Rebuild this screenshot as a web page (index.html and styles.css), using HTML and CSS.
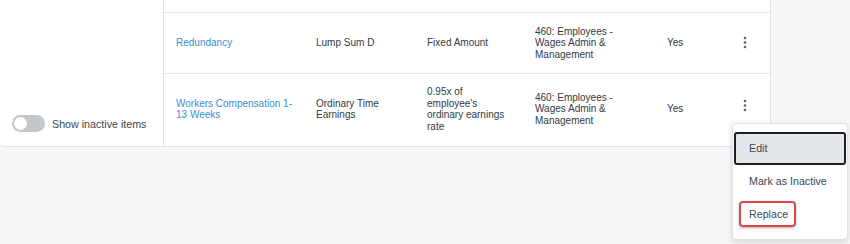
FILE: index.html
```html
<!DOCTYPE html>
<html>
<head>
    <title>Pay items</title>
    <meta charset="utf-8">
    <link rel="stylesheet" href="styles.css">
</head>
<body>
<div class="page">
    <div class="card">
        <div class="sidebar">
            <label class="toggle">
                <span class="switch"><span class="knob"></span></span>
                Show inactive items
            </label>
        </div>
        <div class="table">
            <div class="row row-prev"></div>
            <div class="row">
                <div class="cell"><a href="#">Redundancy</a></div>
                <div class="cell">Lump Sum D</div>
                <div class="cell">Fixed Amount</div>
                <div class="cell">460: Employees - Wages Admin &amp; Management</div>
                <div class="cell">Yes</div>
                <div class="cell action">
                    <svg width="4" height="14" viewBox="0 0 4 14"><circle cx="2" cy="2" r="1.3"/><circle cx="2" cy="6.5" r="1.3"/><circle cx="2" cy="11" r="1.3"/></svg>
                </div>
            </div>
            <div class="row last">
                <div class="cell"><a href="#">Workers Compensation 1-13 Weeks</a></div>
                <div class="cell">Ordinary Time Earnings</div>
                <div class="cell">0.95x of employee's ordinary earnings rate</div>
                <div class="cell">460: Employees - Wages Admin &amp; Management</div>
                <div class="cell">Yes</div>
                <div class="cell action up">
                    <svg width="4" height="14" viewBox="0 0 4 14"><circle cx="2" cy="2" r="1.3"/><circle cx="2" cy="6.5" r="1.3"/><circle cx="2" cy="11" r="1.3"/></svg>
                </div>
            </div>
        </div>
    </div>

    <div class="menu">
        <div class="item focused">Edit</div>
        <div class="item">Mark as Inactive</div>
        <div class="item">Replace<span class="highlight"></span></div>
    </div>
</div>
</body>
</html>
```

FILE: styles.css
```css
html,body{
    padding: 0;
    margin: 0;
    font-family: "Liberation Sans", Arial, sans-serif;
    background: #f7f8f9;
}

.page{
    position: relative;
    width: 850px;
    height: 244px;
}

.card{
    display: flex;
    width: 771px;
    height: 147px;
    background: #fff;
    border-right: 1px solid #e3e5e8;
    border-bottom: 1px solid #e3e5e8;
    border-bottom-left-radius: 4px;
    box-sizing: border-box;
}

.sidebar{
    width: 164px;
    flex-shrink: 0;
    border-right: 1px solid #e3e5e8;
    box-sizing: border-box;
    display: flex;
    align-items: flex-end;
    padding: 0 0 14px 12px;
}

.toggle{
    display: flex;
    align-items: center;
    font-size: 10.7px;
    color: #3f4654;
}

.switch{
    width: 33px;
    height: 17px;
    border-radius: 9px;
    background: #c3c7cc;
    margin-right: 7px;
    display: flex;
    align-items: center;
}

.knob{
    width: 13px;
    height: 13px;
    border-radius: 50%;
    background: #fff;
    margin-left: 2px;
}

.table{
    flex: 1;
    font-size: 10px;
    line-height: 11.5px;
    color: #333a45;
}

.row{
    display: grid;
    grid-template-columns: 140px 111px 108px 132px 76px 1fr;
    align-items: center;
    padding: 12.5px 0;
    border-bottom: 1px solid #e6e8eb;
}

.row-prev{
    height: 12px;
    padding: 0;
}

.row.last{
    border-bottom: none;
}

.cell{
    padding: 0 12px;
}

.cell a{
    color: #3a8fd0;
    text-decoration: none;
}

.action{
    padding-left: 12px;
    display: flex;
}

.action svg{
    fill: #5a6270;
}

.action.up{
    margin-top: -6px;
}

.menu{
    position: absolute;
    left: 732px;
    top: 123px;
    width: 116px;
    padding: 8px 1px;
    box-sizing: border-box;
    background: #fff;
    border: 1px solid #dfe1e4;
    border-radius: 4px;
    box-shadow: 0 2px 6px rgba(0,0,0,0.15);
    font-size: 10.7px;
    color: #404756;
}

.item{
    position: relative;
    height: 33px;
    line-height: 29px;
    padding: 0 13px;
    box-sizing: border-box;
    border: 2px solid transparent;
    border-radius: 3px;
}

.item.focused{
    background: #e5e8eb;
    border-color: #1d1f22;
}

.highlight{
    position: absolute;
    left: 3px;
    top: 1px;
    width: 57px;
    height: 26px;
    box-sizing: border-box;
    border: 2px solid #e0454a;
    border-radius: 4px;
    box-shadow: 0 1px 3px rgba(0,0,0,0.3);
}
```
